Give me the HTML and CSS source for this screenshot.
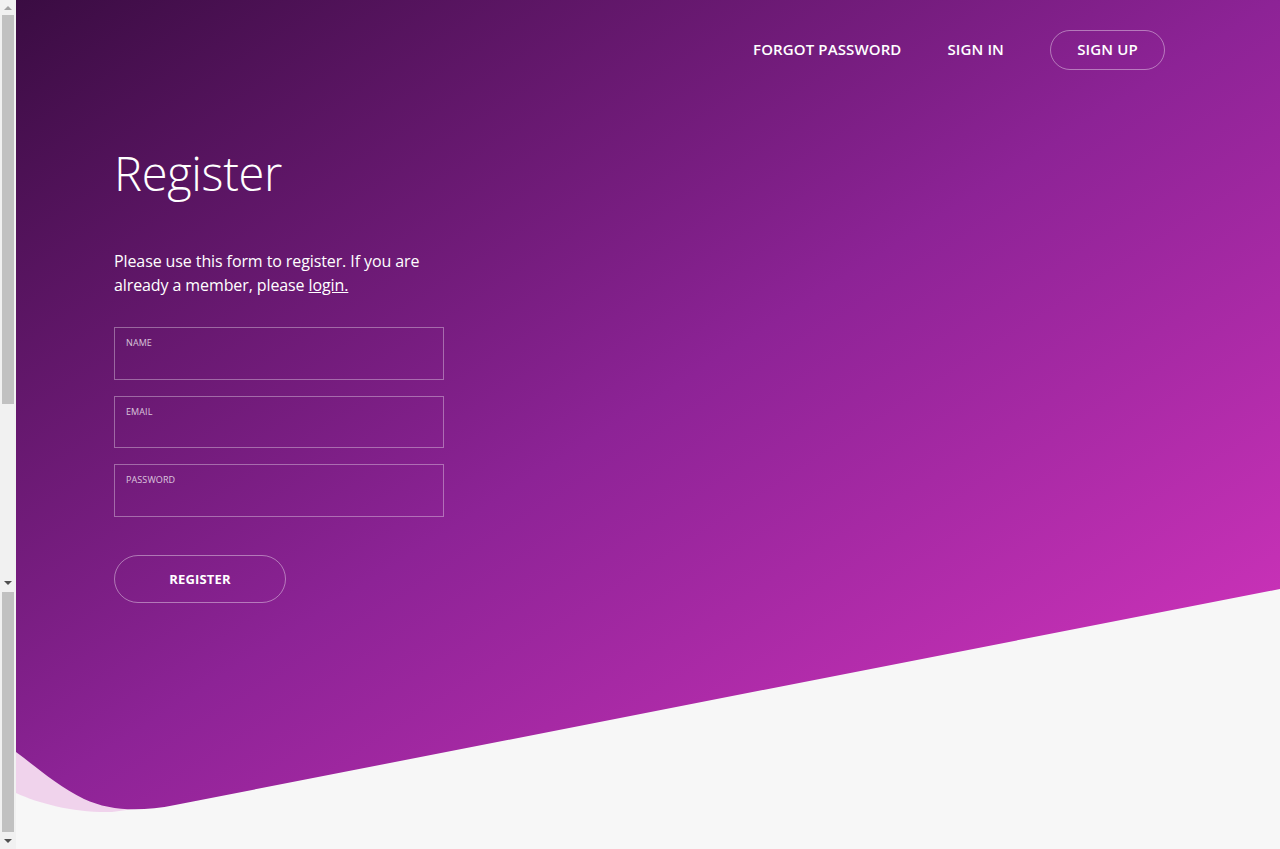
FILE: index.html
```html
<!DOCTYPE html>
<html lang="en">
<head>
<meta charset="utf-8">
<title>Register</title>
<link rel="stylesheet" href="styles.css">
</head>
<body>
<div class="frame">
  <div class="scrollbars">
    <div class="sb sb-top">
      <div class="sb-arrow up"></div>
      <div class="sb-thumb thumb-a"></div>
      <div class="sb-track"></div>
      <div class="sb-arrow down"></div>
    </div>
    <div class="sb sb-bottom">
      <div class="sb-thumb thumb-b"></div>
      <div class="sb-arrow down"></div>
    </div>
  </div>
  <div class="page">
    <svg class="bg" viewBox="16 0 1264 849" preserveAspectRatio="none" aria-hidden="true">
      <defs>
        <linearGradient id="grad" x1="0" y1="0" x2="1" y2="1">
          <stop offset="0" stop-color="#3a0c42"/>
          <stop offset="0.5" stop-color="#8d2396"/>
          <stop offset="1" stop-color="#dc36c2"/>
        </linearGradient>
      </defs>
      <path d="M16,700 L16,793 C40,804 75,813 112,812 L200,800 Z" fill="#f0d3ec"/>
      <path d="M16,0 H1280 V589 L175,805 C140,812 110,811 84,799 C58,786 36,767 16,752 Z" fill="url(#grad)"/>
    </svg>
    <header class="nav">
      <a class="nav-link" href="#">FORGOT PASSWORD</a>
      <a class="nav-link" href="#">SIGN IN</a>
      <a class="nav-btn" href="#">SIGN UP</a>
    </header>
    <main class="content">
      <h1 class="title">Register</h1>
      <p class="intro">Please use this form to register. If you are already a member, please <a href="#">login.</a></p>
      <form class="form">
        <label class="field"><span class="field-label">NAME</span><input type="text"></label>
        <label class="field"><span class="field-label">EMAIL</span><input type="email"></label>
        <label class="field"><span class="field-label">PASSWORD</span><input type="password"></label>
        <button type="button" class="submit">REGISTER</button>
      </form>
    </main>
  </div>
</div>
</body>
</html>
```

FILE: styles.css
```css
* { box-sizing: border-box; }
html, body { margin: 0; padding: 0; height: 100%; overflow: hidden; }
body { font-family: "Open Sans", "Liberation Sans", sans-serif; color: #fff; }

.frame { display: flex; width: 1280px; height: 849px; }

.scrollbars { width: 16px; flex: none; display: flex; flex-direction: column; background: #f1f1f1; }
.sb { display: flex; flex-direction: column; align-items: center; }
.sb-top { height: 590px; }
.sb-bottom { flex: 1; padding-top: 2px; }
.sb-thumb { width: 12px; background: #c1c1c1; }
.thumb-a { height: 389px; }
.thumb-b { height: 240px; }
.sb-track { flex: 1; }
.sb-arrow { height: 15px; width: 16px; display: flex; align-items: center; justify-content: center; }
.sb-arrow::before { content: ""; width: 0; height: 0; border-left: 4px solid transparent; border-right: 4px solid transparent; }
.sb-arrow.up::before { border-bottom: 4px solid #a3a3a3; }
.sb-arrow.down::before { border-top: 4px solid #505050; }
.sb-bottom .sb-arrow { flex: 1; }

.page { position: relative; flex: 1; height: 849px; background: #f7f7f7; overflow: hidden; }
.bg { position: absolute; left: 0; top: 0; width: 1264px; height: 849px; z-index: 0; }

.nav { position: relative; z-index: 1; display: flex; justify-content: flex-end; align-items: center; gap: 46px; padding: 30px 115px 0 0; }
.nav-link, .nav-btn { color: #fff; text-decoration: none; font-size: 15px; font-weight: 600; letter-spacing: 0.12px; line-height: 18px; }
.nav-link { padding-bottom: 2px; }
.nav-btn { display: flex; align-items: center; justify-content: center; width: 115px; height: 40px; border: 1px solid rgba(255,255,255,0.4); border-radius: 20px; padding-bottom: 2px; }

.content { position: relative; z-index: 1; padding: 0 0 0 98px; width: 460px; }
.title { margin: 73px 0 0; font-size: 47px; font-weight: 300; line-height: 60px; letter-spacing: -0.3px; }
.intro { margin: 46px 0 0; font-size: 16px; line-height: 24px; width: 330px; letter-spacing: -0.1px; }
.intro a { color: #fff; text-decoration: underline; }

.form { display: flex; flex-direction: column; gap: 16px; margin-top: 30px; }
.field { display: block; width: 330px; height: 52.5px; border: 1px solid rgba(255,255,255,0.35); padding: 9px 11px 0; }
.field-label { display: block; font-size: 9px; font-weight: 400; color: rgba(255,255,255,0.75); letter-spacing: 0.1px; line-height: 12px; }
.field input { display: block; width: 100%; background: transparent; border: 0; outline: none; color: #fff; font: inherit; font-size: 14px; padding: 2px 0; }
.submit { margin-top: 22.5px; width: 172px; height: 48px; border-radius: 24px; border: 1px solid rgba(255,255,255,0.4); background: transparent; color: #fff; font-family: inherit; font-size: 13px; font-weight: 700; letter-spacing: 0.2px; cursor: pointer; padding-bottom: 2px; }
```
